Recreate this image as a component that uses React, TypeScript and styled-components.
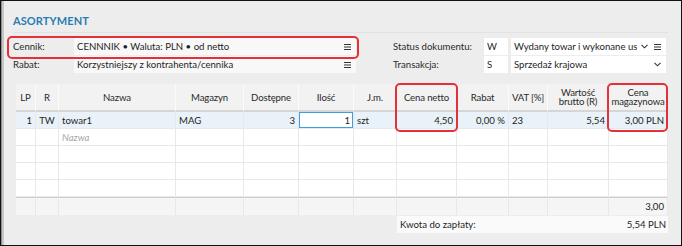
import styled, { createGlobalStyle } from "styled-components";

const GlobalStyle = createGlobalStyle`
  html, body { margin: 0; padding: 0; background: #ffffff; }
  body {
    font-family: Lato, "Open Sans", sans-serif;
    font-size: 9.6px;
    color: #1e1e1e;
  }
  * { box-sizing: border-box; }
`;

const cols = [20, 23, 117, 68, 55, 55, 43, 60, 52, 39, 61, 59];

const heads = [
  "LP",
  "R",
  "Nazwa",
  "Magazyn",
  "Dostępne",
  "Ilość",
  "J.m.",
  "Cena netto",
  "Rabat",
  "VAT [%]",
  "Wartość brutto (R)",
  "Cena magazynowa",
];

type Align = "left" | "right" | "center";
type CellData = { text?: string; align?: Align; placeholder?: boolean; focus?: boolean };

const firstRow: CellData[] = [
  { text: "1", align: "right" },
  { text: "TW", align: "center" },
  { text: "towar1" },
  { text: "MAG" },
  { text: "3", align: "right" },
  { text: "1", align: "right", focus: true },
  { text: "szt" },
  { text: "4,50", align: "right" },
  { text: "0,00 %", align: "right" },
  { text: "23" },
  { text: "5,54", align: "right" },
  { text: "3,00 PLN", align: "right" },
];

const emptyRow = (withPlaceholder: boolean): CellData[] =>
  cols.map((_, i) => (i === 2 && withPlaceholder ? { text: "Nazwa", placeholder: true } : {}));

const Frame = styled.div`
  position: relative;
  width: 682px;
  height: 246px;
  border: 1px solid #111;
  background: #ededed;
  box-shadow: inset 1px 0 0 #8c8c8c, inset 3px 0 0 #c6c6c6;
  padding: 12px 14px 0 12px;
`;

const Title = styled.div`
  height: 20px;
  font-size: 11px;
  font-weight: 700;
  color: #2a7cb3;
  letter-spacing: 0.1px;
  border-bottom: 1px solid #e2e2e2;
  padding-top: 1px;
  margin-right: -1px;
`;

const Form = styled.div`
  display: flex;
  justify-content: space-between;
  margin-top: 5px;
  margin-right: 1px;
`;

const FormGroup = styled.div<{ $labelWidth: number; $width: number }>`
  display: grid;
  grid-template-columns: ${(p) => p.$labelWidth}px 1fr;
  grid-auto-rows: 17px;
  row-gap: 1px;
  width: ${(p) => p.$width}px;
`;

const Label = styled.div`
  display: flex;
  align-items: center;
  color: #2a2a2a;
`;

const Field = styled.div<{ $white?: boolean }>`
  display: flex;
  align-items: center;
  gap: 2px;
  background: ${(p) => (p.$white ? "#ffffff" : "#f8f8f8")};
  padding: 0 3px;
  min-width: 0;
`;

const FieldText = styled.span`
  flex: 1;
  white-space: nowrap;
  overflow: hidden;
  min-width: 0;
`;

const SplitField = styled.div`
  display: grid;
  grid-template-columns: 24px 1fr;
  column-gap: 3px;
`;

const IconSlot = styled.span`
  display: inline-flex;
  width: 11px;
  justify-content: center;
  flex: none;
`;

const MenuIcon = () => (
  <svg width="7" height="6" viewBox="0 0 7 6">
    <path d="M0 0.5H7M0 3H7M0 5.5H7" stroke="#333" strokeWidth="1" />
  </svg>
);

const Chevron = () => (
  <svg width="7" height="5" viewBox="0 0 7 5">
    <path d="M0.5 0.8L3.5 3.8L6.5 0.8" stroke="#333" strokeWidth="1.1" fill="none" />
  </svg>
);

const Table = styled.div`
  display: grid;
  grid-template-columns: ${cols.map((c) => `${c}px`).join(" ")};
  width: 652px;
  margin: 11px 0 0 3px;
  background: #ffffff;
`;

const HeadCell = styled.div`
  height: 28px;
  display: flex;
  align-items: center;
  justify-content: center;
  text-align: center;
  line-height: 9px;
  padding: 0;
  letter-spacing: -0.15px;
  background: #f2f2f2;
  border-right: 1px solid #fbfbfb;
  border-bottom: 2px solid #d6d6d6;
  color: #2a2a2a;
`;

const Cell = styled.div<{ $align?: Align; $tint?: boolean; $focus?: boolean; $foot?: boolean }>`
  height: 17px;
  display: flex;
  align-items: center;
  justify-content: ${(p) =>
    p.$align === "right" ? "flex-end" : p.$align === "center" ? "center" : "flex-start"};
  padding: 0 3px;
  white-space: nowrap;
  overflow: hidden;
  background: ${(p) => (p.$foot ? "#f5f5f5" : p.$focus ? "#ffffff" : p.$tint ? "#e9f2f8" : "#ffffff")};
  border-right: 1px solid #e8e8e8;
  border-bottom: 1px solid #e8e8e8;
  ${(p) => p.$foot && "border-top: 1px solid #cfcfcf; border-bottom: none; height: 18px;"}
  ${(p) => p.$focus && "box-shadow: inset 0 0 0 1px #3f9fe0;"}
`;

const Placeholder = styled.span`
  color: #a8a8a8;
  font-style: italic;
`;

const Summary = styled.div`
  display: flex;
  justify-content: space-between;
  align-items: center;
  width: 271px;
  height: 17px;
  margin: 1px 0 0 384px;
  padding: 0 2px 0 3px;
  background: #fafafa;
`;

const Highlight = styled.div<{ $x: number; $y: number; $w: number; $h: number }>`
  position: absolute;
  left: ${(p) => p.$x}px;
  top: ${(p) => p.$y}px;
  width: ${(p) => p.$w}px;
  height: ${(p) => p.$h}px;
  border: 2px solid #e5303a;
  border-radius: 5px;
  pointer-events: none;
`;

const rows: CellData[][] = [firstRow, emptyRow(true), emptyRow(false), emptyRow(false), emptyRow(false)];

export default function App() {
  return (
    <>
      <GlobalStyle />
      <Frame>
        <Title>ASORTYMENT</Title>
        <Form>
          <FormGroup $labelWidth={61} $width={343}>
            <Label>Cennik:</Label>
            <Field>
              <FieldText>CENNNIK • Waluta: PLN • od netto</FieldText>
              <IconSlot>
                <MenuIcon />
              </IconSlot>
            </Field>
            <Label>Rabat:</Label>
            <Field>
              <FieldText>Korzystniejszy z kontrahenta/cennika</FieldText>
              <IconSlot>
                <MenuIcon />
              </IconSlot>
            </Field>
          </FormGroup>
          <FormGroup $labelWidth={91} $width={273}>
            <Label>Status dokumentu:</Label>
            <SplitField>
              <Field $white>W</Field>
              <Field $white>
                <FieldText>Wydany towar i wykonane usłu</FieldText>
                <IconSlot>
                  <Chevron />
                </IconSlot>
                <IconSlot>
                  <MenuIcon />
                </IconSlot>
              </Field>
            </SplitField>
            <Label>Transakcja:</Label>
            <SplitField>
              <Field $white>S</Field>
              <Field $white>
                <FieldText>Sprzedaż krajowa</FieldText>
                <IconSlot>
                  <Chevron />
                </IconSlot>
              </Field>
            </SplitField>
          </FormGroup>
        </Form>
        <Table>
          {heads.map((h) => (
            <HeadCell key={h}>{h}</HeadCell>
          ))}
          {rows.map((row, r) =>
            row.map((c, i) => (
              <Cell key={`${r}-${i}`} $align={c.align} $tint={r === 0} $focus={c.focus}>
                {c.placeholder ? <Placeholder>{c.text}</Placeholder> : c.text}
              </Cell>
            ))
          )}
          {cols.map((_, i) => (
            <Cell key={`f-${i}`} $foot $align="right">
              {i === cols.length - 1 ? "3,00" : ""}
            </Cell>
          ))}
        </Table>
        <Summary>
          <span>Kwota do zapłaty:</span>
          <span>5,54 PLN</span>
        </Summary>
        <Highlight $x={6} $y={35} $w={352} $h={23} />
        <Highlight $x={394} $y={82} $w={63} $h={49} />
        <Highlight $x={606} $y={82} $w={61} $h={49} />
      </Frame>
    </>
  );
}
